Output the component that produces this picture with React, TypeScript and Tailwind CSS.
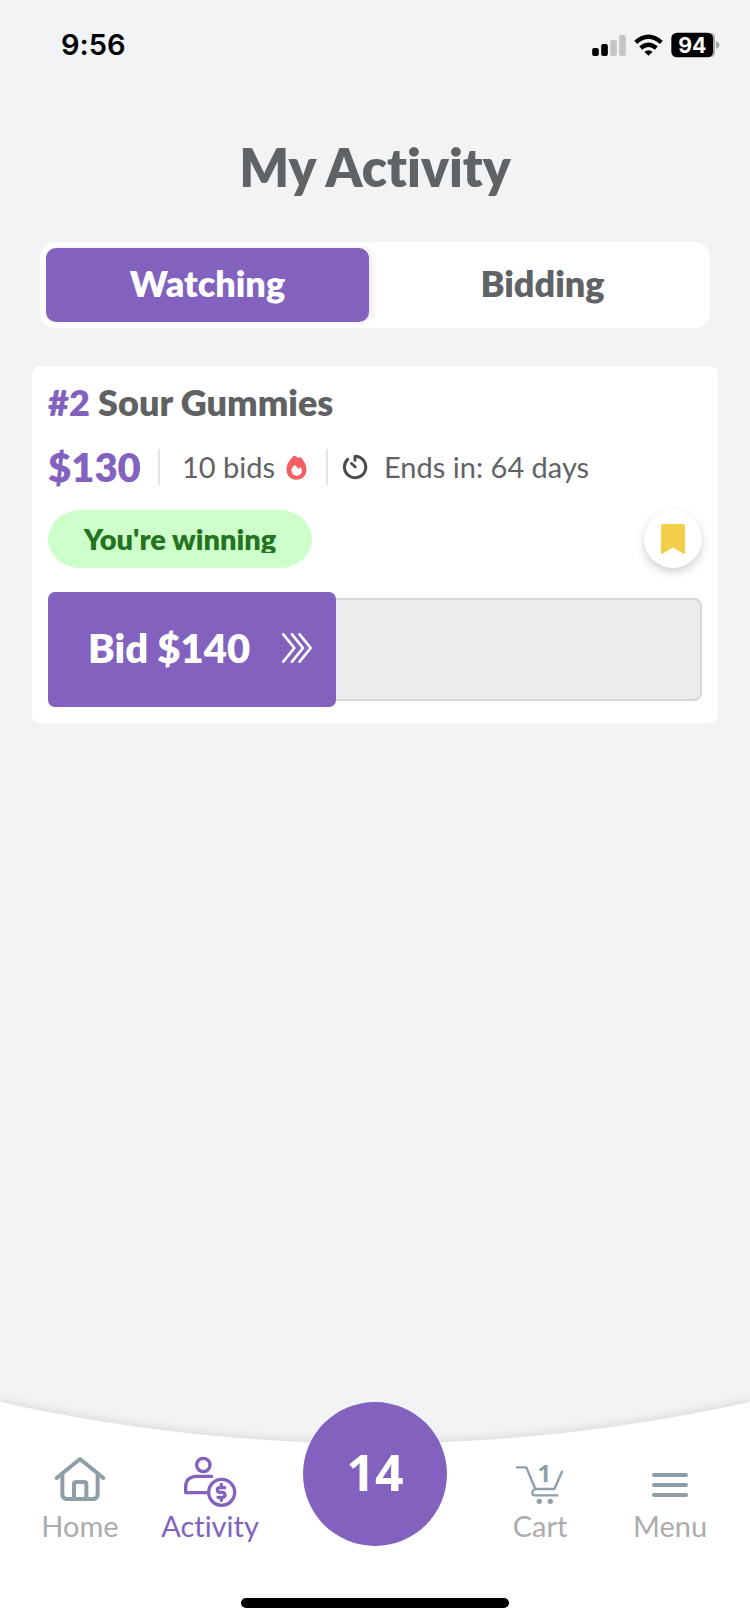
import type { ReactNode } from "react";

function StatusBar() {
  return (
    <header className="flex h-[90px] items-center justify-between pl-[61px] pr-[30px] text-black">
      <time className="font-['Inter',sans-serif] text-[29px] font-semibold leading-9">9:56</time>
      <div className="flex items-center gap-2">
        <svg className="h-[21px] w-[34px]" viewBox="649 102 101 63" aria-hidden="true">
          <rect x="649" y="141" width="20" height="24" rx="6" />
          <rect x="676" y="129" width="20" height="36" rx="6" />
          <rect x="703" y="117" width="20" height="48" rx="6" fill="#c4c5c7" />
          <rect x="730" y="102" width="20" height="63" rx="6" fill="#c4c5c7" />
        </svg>
        <svg className="h-[22px] w-[29px]" viewBox="776 100 87 66" fill="none" stroke="#000" strokeWidth="13" aria-hidden="true">
          <path d="M781 125 Q819 91 858 125" />
          <path d="M796 142 Q819 122 843 142" />
          <path d="M819.500 165 L807 153 Q819.500 144 832 153 Z" fill="#000" stroke="none" />
        </svg>
        <svg className="h-[26px] w-[49px]" viewBox="887 95 147 78" role="img" aria-label="Battery 94 percent">
          <path d="M1000 97 H1003 Q1019 97 1019 113 V155 Q1019 171 1003 171 H1000Z" fill="#a5a6a8" />
          <rect x="888" y="97" width="125" height="74" rx="17" />
          <path d="M1022 123 Q1032 126 1032 134 Q1032 142 1022 145Z" fill="#a5a6a8" />
          <text x="951" y="157" textAnchor="middle" fontFamily="Inter, sans-serif" fontWeight="700" fontSize="64" fill="#fff">94</text>
        </svg>
      </div>
    </header>
  );
}

function Tabs() {
  return (
    <div role="tablist" className="mx-10 mt-[45px] flex h-[86px] rounded-[15px] bg-white p-1.5 text-[36px] font-extrabold leading-10">
      <button role="tab" aria-selected="true" className="flex-1 rounded-[10px] bg-[#8262be] pb-1 text-white shadow-[4px_0_8px_-2px_rgba(0,0,0,0.12)]">
        Watching
      </button>
      <button role="tab" aria-selected="false" className="flex-1 pb-1 pl-3 text-[#5f6366]">
        Bidding
      </button>
    </div>
  );
}

function FlameIcon() {
  return (
    <svg className="h-[25px] w-[21px]" viewBox="860 706 62 75" aria-hidden="true">
      <path
        fill="#f45f62"
        fillRule="evenodd"
        d="M885 708 Q889 708 896 716 Q900 711 904 713 Q921 731 921 750 C921 768 908 780 891 780 C874 780 861 768 861 750 Q861 729 881 710 Q883 708 885 708Z M886 736 C879 742 875 747 876 754 C877 763 883 768 891 768 C900 768 907 762 907 753 Q907 747 903 742 L897 748 Q892 741 886 736Z"
      />
    </svg>
  );
}

function TimerIcon() {
  return (
    <svg className="h-[26px] w-[26px]" viewBox="1026 705 78 78" fill="none" stroke="#4b4c4e" strokeWidth="9" strokeLinecap="round" strokeLinejoin="round" aria-hidden="true">
      <path d="M1065 724 V712 A32 32 0 1 1 1043 721" />
      <path d="M1054 733 L1066 744" strokeWidth="8" />
    </svg>
  );
}

function LotCard() {
  return (
    <article className="mx-8 mt-[38px] rounded-lg bg-white p-4">
      <h2 className="text-[36px] font-extrabold leading-10 text-[#606163]">
        <span className="text-[#8262be]">#2</span> Sour Gummies
      </h2>
      <div className="mt-[21px] flex h-12 items-center text-[29px] leading-9 text-[#5f6366]">
        <strong className="w-[110px] text-[40px] font-extrabold leading-[48px] text-[#8262be]">$130</strong>
        <div className="flex h-9 items-center gap-2.5 border-l-2 border-[#e3e3e4] pl-[22px] pr-[19px]">
          <span className="w-[94px] whitespace-nowrap">10 bids</span>
          <FlameIcon />
        </div>
        <div className="flex h-9 items-center gap-4 border-l-2 border-[#e3e3e4] pl-3.5">
          <TimerIcon />
          <span>Ends in: 64 days</span>
        </div>
      </div>
      <div className="mt-[19px] flex items-center justify-between">
        <div className="flex h-[58px] w-[264px] items-center justify-center rounded-[32px/29px] bg-[#cdffcb] text-[29px] font-extrabold text-[#24731f]">
          <span className="h-7 overflow-hidden whitespace-nowrap leading-7">You're winning</span>
        </div>
        <button aria-label="Remove bookmark" className="flex size-[58px] items-center justify-center rounded-full bg-white shadow-[0_4px_8px_rgba(60,70,75,0.25)]">
          <svg className="h-[30px] w-6" viewBox="0 0 24 30" aria-hidden="true">
            <path d="M2 0H22Q24 0 24 2V29Q24 30.500 22.500 29.700L12 23.500L1.500 29.700Q0 30.500 0 29V2Q0 0 2 0Z" fill="#f3ce49" />
          </svg>
        </button>
      </div>
      <div className="mt-6 flex items-center">
        <button className="z-10 flex h-[115px] w-[288px] items-center justify-between rounded-[7px] bg-[#8262be] pb-1 pl-10 pr-6 text-[40px] font-extrabold leading-[48px] text-white">
          Bid $140
          <svg className="h-[30px] w-[30px]" viewBox="846 462 90 90" fill="none" stroke="#fff" strokeWidth="8" strokeLinecap="round" strokeLinejoin="round" aria-hidden="true">
            <path d="M850 466 L883 507 L850 548" />
            <path d="M876 466 L909 507 L876 548" />
            <path d="M899 466 L932 507 L899 548" />
          </svg>
        </button>
        <div className="-ml-2 h-[103px] flex-1 rounded-lg border-2 border-[#d8d8d8] bg-[#ececee]" />
      </div>
    </article>
  );
}

function NavItem({ label, active, children }: { label: string; active?: boolean; children: ReactNode }) {
  return (
    <a href="#" aria-current={active ? "page" : undefined} className={active ? "flex flex-col items-center text-[#8262be]" : "flex flex-col items-center text-[#acacac]"}>
      {children}
      <span className="text-[29px] leading-9">{label}</span>
    </a>
  );
}

function BottomNav() {
  return (
    <nav className="relative flex h-[222px] flex-col justify-between pb-4">
      <svg className="absolute inset-0 h-full w-full overflow-visible drop-shadow-[0_-2px_5px_rgba(0,0,0,0.1)]" viewBox="0 0 750 222" preserveAspectRatio="none" aria-hidden="true">
        <path d="M0 0 Q375 83 750 0 V222 H0Z" fill="#fff" />
      </svg>
      <div className="relative grid grid-cols-[13fr_13fr_20fr_13fr_13fr] px-[15px]">
        <div className="pt-[54px]">
          <NavItem label="Home">
            <svg className="h-[52px] w-[54px]" viewBox="159 228 162 156" fill="none" stroke="#8e9fa9" strokeWidth="12" strokeLinecap="round" strokeLinejoin="round" aria-hidden="true">
              <path d="M170 294 L240 237 L310 294" />
              <path d="M187 285 V341 Q187 357 203 357 H277 Q293 357 293 341 V285" />
              <path d="M222 355 V312 Q222 306 228 306 H253 Q259 306 259 312 V355" />
            </svg>
          </NavItem>
        </div>
        <div className="pt-[54px]">
          <NavItem label="Activity" active>
            <svg className="h-[52px] w-[54px]" viewBox="549 228 162 156" fill="none" stroke="#8262be" strokeWidth="10" strokeLinecap="round" strokeLinejoin="round" aria-hidden="true">
              <circle cx="610" cy="255" r="20" />
              <path d="M635 289 H587 Q557 292 557 320 V338 H620" />
              <circle cx="665" cy="337" r="39" />
              <path d="M674 323 H660 Q652 323 652 330 Q652 336 660 337 H667 Q675 338 675 345 Q675 352 667 352 H654 M664 313 V320 M664 355 V361" />
            </svg>
          </NavItem>
        </div>
        <div className="flex justify-center">
          <button className="flex size-36 items-center justify-center rounded-full bg-[#8262be] text-white">
            <span className="pb-1 text-[50px] font-bold leading-[60px] font-['Open_Sans','Noto_Sans',sans-serif]">14</span>
          </button>
        </div>
        <div className="pt-[54px]">
          <NavItem label="Cart">
            <svg className="h-[52px] w-[54px]" viewBox="99 228 162 156" fill="none" stroke="#8e9fa9" strokeWidth="7" strokeLinecap="round" strokeLinejoin="round" aria-hidden="true">
              <path d="M111 262 H139 L166 327 H223 L246 275" />
              <path d="M164 328 Q157 332 157 338 Q157 346 166 346 H232" />
              <circle cx="178" cy="364" r="8" fill="#8e9fa9" stroke="none" />
              <circle cx="211" cy="364" r="8" fill="#8e9fa9" stroke="none" />
              <text x="193" y="306" textAnchor="middle" fontFamily="Open Sans, sans-serif" fontWeight="700" fontSize="72" fill="#8e9fa9" stroke="none">1</text>
            </svg>
          </NavItem>
        </div>
        <div className="pt-[54px]">
          <NavItem label="Menu">
            <svg className="h-[52px] w-[54px]" viewBox="489 228 162 156" fill="none" stroke="#8e9fa9" strokeWidth="12" strokeLinecap="round" aria-hidden="true">
              <path d="M522 285 H618 M522 315 H618 M522 345 H618" />
            </svg>
          </NavItem>
        </div>
      </div>
      <div className="relative h-2.5 w-[268px] self-center rounded-full bg-black" />
    </nav>
  );
}

export default function App() {
  return (
    <div className="flex min-h-screen flex-col overflow-hidden bg-[#f1f3f5] font-['Lato','Open_Sans',sans-serif] [font-variant-ligatures:none]">
      <StatusBar />
      <main className="flex-1 pt-[47px]">
        <h1 className="text-center text-[52px] font-extrabold leading-[60px] text-[#5f6366]">My Activity</h1>
        <Tabs />
        <LotCard />
      </main>
      <BottomNav />
    </div>
  );
}
